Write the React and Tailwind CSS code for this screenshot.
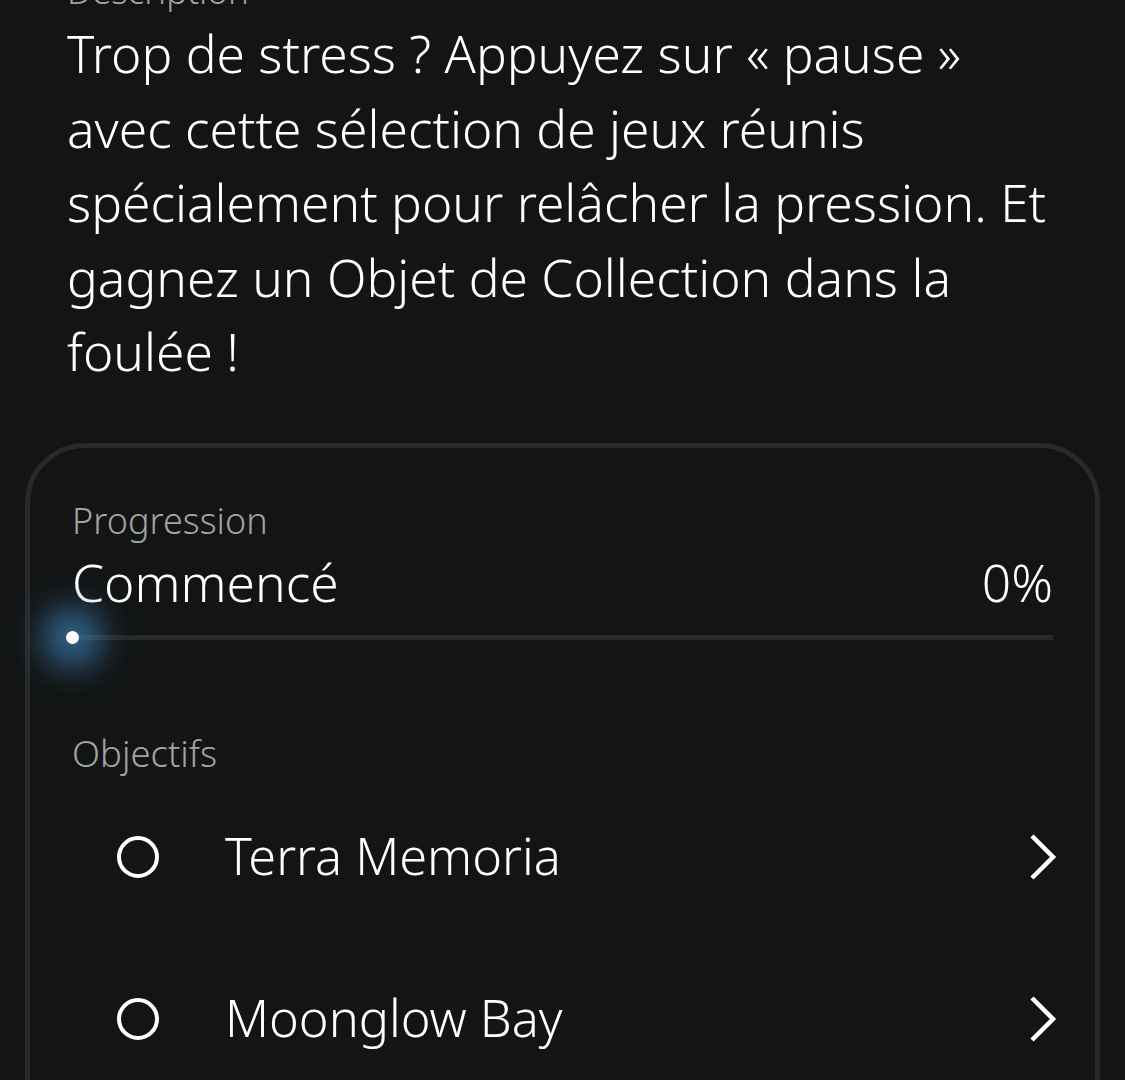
import React from 'react';

const font = { fontFamily: '"Noto Sans", "Open Sans", sans-serif' };

function Chevron() {
  return (
    <svg width="28" height="46" viewBox="0 0 28 46" fill="none">
      <path d="M3 2 L24 23 L3 44" stroke="white" strokeWidth="4.5" />
    </svg>
  );
}

function Objective({ label }) {
  return (
    <div className="flex items-center h-[162px] pl-[45px] mr-[-4px]">
      <span className="block w-[42px] h-[42px] rounded-full border-[4px] border-white" />
      <span className="ml-[66px] flex-1 text-[50.5px] font-[350] text-white leading-none">{label}</span>
      <Chevron />
    </div>
  );
}

export default function App() {
  return (
    <div className="w-[1125px] h-[1080px] bg-[#131515] overflow-hidden" style={font}>
      {/* Description */}
      <div className="px-[67px] -mt-[31px]">
        <div className="text-[35px] leading-[44px] font-[350] text-[#a3a3a3]">Description</div>
        <p className="mt-[3px] text-[51.5px] leading-[74.5px] font-[350] text-white whitespace-nowrap">
          Trop de stress ? Appuyez sur « pause »<br />
          avec cette sélection de jeux réunis<br />
          spécialement pour relâcher la pression. Et<br />
          gagnez un Objet de Collection dans la<br />
          foulée !
        </p>
      </div>

      {/* Card */}
      <div className="mx-[25px] mt-[54px] rounded-[60px] border-[5px] border-[#27292b] px-[42px] pt-[55px] pb-[200px]">
        <div className="text-[36px] leading-none font-[350] text-[#a3a3a3]">Progression</div>
        <div className="mt-[18px] flex items-end justify-between text-[51.5px] leading-none font-[350] text-white">
          <span>Commencé</span>
          <span>0%</span>
        </div>
        <div className="relative mt-[27px] h-[5px] bg-[#27292b]">
          <span className="absolute left-[-6px] top-[-4px] w-[13px] h-[13px] rounded-full bg-white shadow-[0_0_32px_22px_rgba(62,134,190,0.7)]" />
        </div>
        <div className="mt-[95px] text-[36.5px] leading-none font-[350] text-[#a3a3a3]">Objectifs</div>
        <div className="mt-[4px]">
          <Objective label="Terra Memoria" />
          <Objective label="Moonglow Bay" />
        </div>
      </div>
    </div>
  );
}
